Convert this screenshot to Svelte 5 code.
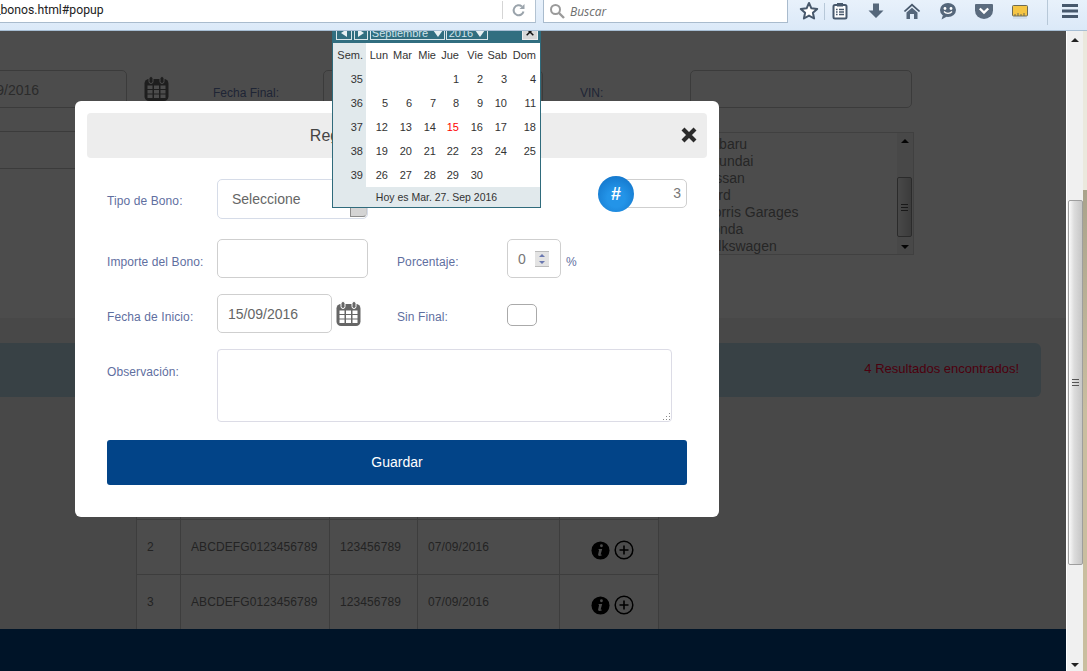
<script>
  const heads = ['Sem.', 'Lun', 'Mar', 'Mie', 'Jue', 'Vie', 'Sab', 'Dom'];
  const weeks = [
    [35, '', '', '', 1, 2, 3, 4],
    [36, 5, 6, 7, 8, 9, 10, 11],
    [37, 12, 13, 14, 15, 16, 17, 18],
    [38, 19, 20, 21, 22, 23, 24, 25],
    [39, 26, 27, 28, 29, 30, '', '']
  ];
  const brands = ['Subaru', 'Hyundai', 'Nissan', 'Ford', 'Morris Garages', 'Honda', 'Volkswagen'];
  const rows = [2, 3];
</script>

{#snippet calIcon()}
  <svg class="calicon" viewBox="0 0 25 25" aria-hidden="true">
    <rect x="0.5" y="3" width="24" height="22" rx="4.5" fill="currentColor" />
    <rect x="5" y="0.5" width="4" height="7" rx="2" fill="currentColor" stroke="var(--cal-bg)" />
    <rect x="16" y="0.5" width="4" height="7" rx="2" fill="currentColor" stroke="var(--cal-bg)" />
    {#each [9.5, 14, 18.5] as y}
      {#each [3.5, 10, 16.5] as x}
        <rect {x} {y} width="5" height="3.5" fill="var(--cal-bg)" />
      {/each}
    {/each}
  </svg>
{/snippet}

<div class="window">
  <header class="chrome">
    <div class="url">
      <span class="urltext">_bonos.html#popup</span>
      <span class="reload">
        <svg viewBox="0 0 16 16" width="16" height="16" aria-hidden="true">
          <path d="M12.5 9.5a5 5 0 1 1-1.6-5" fill="none" stroke="#9aa3ab" stroke-width="2" />
          <path d="M13.5 2v5h-5z" fill="#9aa3ab" />
        </svg>
      </span>
    </div>
    <div class="search">
      <svg viewBox="0 0 16 16" width="16" height="16" aria-hidden="true">
        <circle cx="6.5" cy="6.5" r="4.5" fill="none" stroke="#9a9a9a" stroke-width="2" />
        <path d="M10 10l5 5" stroke="#9a9a9a" stroke-width="2.4" />
      </svg>
      <span>Buscar</span>
    </div>
    <div class="tools">
      <svg class="star" viewBox="0 0 20 20" aria-hidden="true">
        <path d="M10 2l2.4 5.3 5.8.6-4.3 3.9 1.2 5.7-5.1-2.9-5.1 2.9 1.2-5.7L1.8 7.9l5.8-.6z" fill="#fff" stroke="#47586c" stroke-width="2" stroke-linejoin="round" />
      </svg>
      <i class="sep"></i>
      <svg class="list" viewBox="0 0 20 20" aria-hidden="true">
        <rect x="3.5" y="4" width="13" height="13.5" rx="1.5" fill="#fff" stroke="#47586c" stroke-width="2" />
        <rect x="7" y="2" width="6" height="3.5" fill="#47586c" />
        <path d="M6 8.5h1.6M9 8.5h5M6 11h1.6M9 11h5M6 13.5h1.6M9 13.5h5" stroke="#47586c" stroke-width="1.4" />
      </svg>
      <svg viewBox="0 0 20 20" aria-hidden="true">
        <path d="M7 2.5h6v7h4.5L10 17 2.5 9.5H7z" fill="#55677b" />
      </svg>
      <svg viewBox="0 0 20 20" aria-hidden="true">
        <path d="M10 2.5L1.8 10l1.3 1L10 5l6.900 6 1.300-1z" fill="#47586c" />
        <path d="M4.5 11.5L10 6.7l5.500 4.800v6.500h-3.500v-5H8v5H4.500z" fill="#55677b" />
      </svg>
      <svg viewBox="0 0 20 20" aria-hidden="true">
        <ellipse cx="10" cy="9" rx="8" ry="7" fill="#55677b" />
        <path d="M5 14l-1.5 4.500L9 15.500z" fill="#55677b" />
        <circle cx="7" cy="7.5" r="1.4" fill="#fff" />
        <circle cx="13" cy="7.5" r="1.4" fill="#fff" />
        <path d="M6 10.5c2 2.500 6 2.500 8 0" fill="none" stroke="#fff" stroke-width="1.3" />
      </svg>
      <svg viewBox="0 0 20 20" aria-hidden="true">
        <path d="M2 3h16a1 1 0 0 1 1 1v5.500a9 8.500 0 0 1-18 0V4a1 1 0 0 1 1-1z" fill="#5a6b7e" />
        <path d="M5.8 7.5L10 11.500l4.200-4" fill="none" stroke="#fff" stroke-width="2.4" />
      </svg>
      <svg class="ruler" viewBox="0 0 20 20" aria-hidden="true">
        <rect x="2.5" y="4.5" width="15" height="10.5" rx="1" fill="#f5c543" stroke="#6c6a55" />
        <path d="M5 15v-2M8 15v-3M11 15v-2M14 15v-3" stroke="#6c6a55" />
        <path d="M3 17h14" stroke="#cfdde9" stroke-width="1.5" />
      </svg>
      <i class="sep late"></i>
      <svg class="burger" viewBox="0 0 20 20" aria-hidden="true">
        <path d="M2 4.5h16M2 10h16M2 15.5h16" stroke="#47586c" stroke-width="3" />
      </svg>
    </div>
  </header>

  <div class="viewport">
    <main class="page">
      <section class="filters">
        <div class="frow">
          <input class="bg-input date" value="15/09/2016" readonly />
          <span class="bg-cal">{@render calIcon()}</span>
          <span class="bg-label final">Fecha Final:</span>
          <input class="bg-input mid" readonly />
          <span class="bg-label vin">VIN:</span>
          <input class="bg-input vinbox" readonly />
        </div>
        <div class="frow second">
          <input class="bg-input wide" readonly />
          <div class="listbox">
            <ul>
              {#each brands as b}<li>{b}</li>{/each}
            </ul>
            <div class="lb-bar">
              <i class="up"></i>
              <div class="lb-thumb"><b></b></div>
              <i class="down"></i>
            </div>
          </div>
        </div>
      </section>

      <section class="results">
        <div class="alert">4 Resultados encontrados!</div>
        <table>
          <colgroup>
            <col class="c1" /><col class="c2" /><col class="c3" /><col class="c4" /><col class="c5" />
          </colgroup>
          <tbody>
            <tr><td></td><td></td><td></td><td></td><td></td></tr>
            {#each rows as n}
              <tr>
                <td>{n}</td>
                <td>ABCDEFG0123456789</td>
                <td>123456789</td>
                <td>07/09/2016</td>
                <td>
                  <div class="acts">
                    <svg viewBox="0 0 20 20" width="19" height="19" aria-hidden="true">
                      <circle cx="10" cy="10" r="9.5" fill="#000" />
                      <path d="M11 3.5a1.5 1.5 0 1 1 0 3 1.5 1.5 0 0 1 0-3zM8 8.500h3.800L10.200 14c-.1.5.3.6 1.400.2l-.2.9c-1 .7-4.300 1.300-3.900-.8l1-4.700H8z" fill="#fff" />
                    </svg>
                    <svg viewBox="0 0 20 20" width="20" height="20" aria-hidden="true">
                      <circle cx="10" cy="10" r="8.8" fill="none" stroke="#000" stroke-width="1.5" />
                      <path d="M10 5.5v9M5.5 10h9" stroke="#000" stroke-width="1.6" />
                    </svg>
                  </div>
                </td>
              </tr>
            {/each}
          </tbody>
        </table>
      </section>
      <footer class="foot"></footer>

      <div class="overlay"></div>

      <div class="modal">
        <div class="mhead">
          <h2>Registro de Nuevo Bono</h2>
          <svg class="close" viewBox="0 0 18 18" aria-hidden="true">
            <path d="M3 3l12 12M15 3L3 15" stroke="#2b2b2b" stroke-width="4.2" />
          </svg>
        </div>
        <form class="mbody">
          <div class="mrow r1">
            <span class="lab">Tipo de Bono:</span>
            <div class="select">Seleccione<i></i></div>
            <div class="hash">
              <span class="ball">#</span>
              <input class="f hashin" value="3" readonly />
            </div>
          </div>
          <div class="mrow r2">
            <span class="lab">Importe del Bono:</span>
            <input class="f w151" readonly />
            <span class="lab second-col">Porcentaje:</span>
            <div class="number">
              0
              <span class="spin"><i class="sup"></i><i class="sdown"></i></span>
            </div>
            <span class="pct">%</span>
          </div>
          <div class="mrow r3">
            <span class="lab">Fecha de Inicio:</span>
            <input class="f w115" value="15/09/2016" readonly />
            <span class="m-cal">{@render calIcon()}</span>
            <span class="lab third-col">Sin Final:</span>
            <span class="check"></span>
          </div>
          <div class="mrow r4">
            <span class="lab">Observación:</span>
            <div class="ta">
              <textarea></textarea>
              <svg class="grip" viewBox="0 0 9 9" width="9" height="9" aria-hidden="true">
                <path d="M7 1h1v1H7zM4 4h1v1H4zM7 4h1v1H7zM1 7h1v1H1zM4 7h1v1H4zM7 7h1v1H7z" fill="#8a8a8a" />
              </svg>
            </div>
          </div>
          <button type="button" class="save">Guardar</button>
        </form>
      </div>

      <div class="cal">
        <div class="chead">
          <span class="cb prev"><i class="tl"></i></span>
          <span class="cb next"><i class="tr"></i></span>
          <span class="cb month">Septiembre<i class="td"></i></span>
          <span class="cb year">2016<i class="td"></i></span>
          <span class="cb x">
            <svg viewBox="0 0 12 12" width="10" height="10" aria-hidden="true">
              <path d="M2 2l8 8M10 2l-8 8" stroke="#111" stroke-width="1.8" />
            </svg>
          </span>
        </div>
        <div class="grid">
          {#each heads as h, i}
            <span class="cell" class:sem={i === 0}>{h}</span>
          {/each}
          {#each weeks as w}
            {#each w as d, i}
              <span class="cell" class:sem={i === 0} class:today={d === 15 && i !== 0}>{d}</span>
            {/each}
          {/each}
        </div>
        <div class="cfoot">Hoy es Mar. 27. Sep 2016</div>
      </div>
    </main>

    <aside class="scroll">
      <i class="arr aup"></i>
      <div class="thumb"><b></b></div>
      <i class="arr adown"></i>
    </aside>
    <div class="desk"></div>
  </div>
</div>

<style>
  :global(body) {
    margin: 0;
    overflow: hidden;
    font-family: "Liberation Sans", Arial, sans-serif;
  }
  .window {
    width: 1087px;
    height: 671px;
    display: flex;
    flex-direction: column;
    overflow: hidden;
  }

  /* browser toolbar */
  .chrome {
    height: 30px;
    flex: none;
    display: flex;
    align-items: flex-start;
    background: linear-gradient(#e8f1fb, #dbe9f8);
    border-bottom: 1px solid #a7bed4;
  }
  .url {
    width: 535px;
    height: 22px;
    flex: none;
    display: flex;
    justify-content: space-between;
    background: #fff;
    border-right: 1px solid #b3c3d2;
    border-bottom: 1px solid #a9bbcd;
    box-sizing: content-box;
    overflow: hidden;
  }
  .urltext {
    font: 12.2px/21px Roboto, sans-serif;
    color: #222;
    margin-left: -5px;
  }
  .reload {
    width: 32px;
    border-left: 1px solid #d5d5d5;
    height: 18px;
    display: flex;
    justify-content: center;
    align-items: center;
    margin-top: 1px;
  }
  .search {
    width: 243px;
    height: 22px;
    flex: none;
    margin-left: 7px;
    display: flex;
    align-items: center;
    background: #fff;
    border: 1px solid #a9bbcd;
    border-top: 0;
    box-sizing: content-box;
    font: italic 12px "Open Sans", sans-serif;
    color: #6e6e6e;
  }
  .search svg { margin: 0 5px 0 5px; }
  .tools {
    display: flex;
    align-items: center;
    height: 22px;
    margin-left: 11px;
    gap: 16px;
  }
  .tools svg { width: 20px; height: 20px; flex: none; display: block; }
  .sep {
    width: 1px;
    height: 17px;
    background: #b7c8d8;
    margin: 0 -11px 0 -11px;
  }
  .sep.late { margin: 0 -4px 0 1px; height: 28px; }

  .viewport { flex: 1; display: flex; min-height: 0; }

  /* page behind the modal */
  .page {
    position: relative;
    width: 1066px;
    flex: none;
    display: flex;
    flex-direction: column;
    overflow: hidden;
    background: #fff;
    font-size: 12px;
    color: #777;
  }
  .filters { height: 287px; flex: none; padding-top: 39px; box-sizing: border-box; }
  .frow { display: flex; align-items: flex-start; height: 38px; }
  .frow.second { margin-top: 23px; }
  .bg-input {
    height: 38px;
    box-sizing: border-box;
    border: 1px solid #c6c6c6;
    border-radius: 5px;
    background: #fff;
    font: 14px "Liberation Sans", sans-serif;
    color: #8f8f8f;
    padding: 1px 10px 0;
    flex: none;
  }
  .bg-input.date { width: 169px; margin-left: -42px; }
  .bg-cal { margin: 6px 0 0 17px; color: #666; --cal-bg: #fff; display: block; }
  .bg-cal :global(.calicon), .m-cal :global(.calicon) { display: block; width: 25px; height: 25px; }
  .bg-label { color: #6a7cb3; line-height: 14px; margin-top: 16px; flex: none; }
  .final { width: 110px; margin-left: 44px; }
  .bg-input.mid { width: 220px; }
  .vin { margin-left: 37px; width: 110px; }
  .bg-input.vinbox { width: 222px; }
  .bg-input.wide { width: 342px; margin-left: -42px; }
  .listbox {
    margin-left: 391px;
    margin-top: 1px;
    width: 223px;
    height: 123px;
    flex: none;
    box-sizing: border-box;
    display: flex;
    border: 1px solid #d8d8d8;
    overflow: hidden;
    background: #fff;
  }
  .listbox ul {
    list-style: none;
    margin: 3px 0 0;
    padding: 0 0 0 10px;
    flex: 1;
    font-size: 14px;
    line-height: 17px;
    color: #7f7f7f;
  }
  .lb-bar {
    width: 16px;
    flex: none;
    background: #f0f0f0;
    display: flex;
    flex-direction: column;
    align-items: center;
    position: relative;
  }
  .lb-thumb {
    position: absolute;
    top: 44px;
    left: 0;
    width: 15px;
    height: 60px;
    box-sizing: border-box;
    border: 1px solid #8f8f8f;
    border-radius: 2px;
    background: linear-gradient(90deg, #f2f2f2, #c9c9c9);
    display: flex;
    align-items: center;
    justify-content: center;
  }
  .lb-thumb b, .thumb b {
    width: 7px;
    height: 7px;
    background: repeating-linear-gradient(#555 0 1px, transparent 1px 3px);
  }
  .lb-bar .up, .lb-bar .down { position: absolute; left: 4px; width: 0; height: 0; border: 4px solid transparent; }
  .lb-bar .up { top: 6px; border-bottom-color: #111; border-top-width: 0; }
  .lb-bar .down { bottom: 5px; border-top-color: #111; border-bottom-width: 0; }

  .results { flex: 1; min-height: 0; background: #f2f2f2; padding-top: 25px; box-sizing: border-box; overflow: hidden; }
  .alert {
    height: 54px;
    box-sizing: border-box;
    margin: 0 25px 0 -20px;
    padding-right: 22px;
    background: #bbd9e6;
    border-radius: 6px;
    text-align: right;
    font-size: 13px;
    line-height: 52px;
    color: #ff0033;
  }
  table {
    border-collapse: collapse;
    table-layout: fixed;
    width: 522px;
    margin: 67px 0 0 136px;
    background: #fff;
    letter-spacing: 0.1px;
  }
  .c1 { width: 44px; } .c2 { width: 149px; } .c3 { width: 88px; } .c4 { width: 142px; } .c5 { width: 99px; }
  td { border: 1px solid #cdcdcd; height: 55px; padding: 0 0 0 10px; box-sizing: border-box; }
  .acts { display: flex; justify-content: center; align-items: center; gap: 4px; padding: 6px 4px 0 0; }
  .foot { height: 42px; flex: none; background: #004385; }

  .overlay { position: absolute; inset: 0; background: rgba(0, 0, 0, 0.7); }

  /* modal */
  .modal {
    position: absolute;
    left: 75px;
    top: 70px;
    width: 644px;
    box-sizing: border-box;
    padding: 12px 12px 32px;
    background: #fff;
    border-radius: 6px;
  }
  .mhead {
    height: 45px;
    position: relative;
    display: flex;
    align-items: center;
    justify-content: center;
    background: #ededed;
    border-radius: 4px;
  }
  h2 { margin: 0; font-size: 16px; font-weight: 400; color: #444; }
  .close { position: absolute; right: 9px; top: 13px; width: 18px; height: 18px; }
  .mbody { padding: 0 20px; }
  .mrow { display: flex; align-items: center; }
  .lab { width: 110px; flex: none; font-size: 12px; letter-spacing: 0.1px; color: #5f6f9f; padding-top: 6px; }
  .r1 { margin-top: 21px; height: 40px; }
  .r1 .lab { padding-top: 3px; }
  .r2 { margin-top: 20px; height: 39px; }
  .r3 { margin-top: 16px; height: 39px; }
  .r4 { margin-top: 16px; height: 73px; align-items: flex-start; }
  .r4 .lab { padding-top: 16px; }
  .f {
    height: 100%;
    box-sizing: border-box;
    border: 1px solid #cfcfcf;
    border-radius: 5px;
    background: #fff;
    font: 14px "Liberation Sans", sans-serif;
    color: #666;
    padding: 0 10px;
    flex: none;
    outline: none;
  }
  .w151 { width: 151px; }
  .w115 { width: 115px; }
  .select {
    position: relative;
    width: 151px;
    height: 100%;
    box-sizing: border-box;
    border: 1px solid #d6dce8;
    border-radius: 5px;
    padding-left: 14px;
    display: flex;
    align-items: center;
    font-size: 14px;
    color: #666;
  }
  .select i {
    position: absolute;
    right: 0;
    top: 1px;
    bottom: 1px;
    width: 17px;
    box-sizing: border-box;
    background: #d4d4d4;
    border: 1px solid #8c8c8c;
    border-right-color: #c8c8c8;
    border-radius: 0 0 4px 0;
  }
  .hash {
    position: relative;
    margin-left: auto;
    align-self: flex-start;
    width: 71px;
    height: 29px;
  }
  .hashin { width: 100%; text-align: right; padding: 0 5px 2px 0; color: #777; }
  .ball {
    position: absolute;
    left: -18px;
    top: -3px;
    width: 36px;
    height: 36px;
    border-radius: 50%;
    background: radial-gradient(circle at 50% 62%, #2394e8 30%, #0f6dc2 100%);
    color: #fff;
    font: bold 18px/36px "Liberation Sans", sans-serif;
    text-align: center;
  }
  .second-col { margin-left: 29px; }
  .number {
    position: relative;
    width: 54px;
    height: 100%;
    box-sizing: border-box;
    border: 1px solid #cfcfcf;
    border-radius: 5px;
    padding-left: 10px;
    display: flex;
    align-items: center;
    font-size: 14px;
    color: #777;
  }
  .spin {
    position: absolute;
    left: 27px;
    top: 11px;
    width: 14px;
    height: 16px;
    display: flex;
    flex-direction: column;
    align-items: center;
    background: #e3e3e3;
    border-top: 1px solid #bbb;
    border-bottom: 1px solid #bbb;
    box-sizing: border-box;
    justify-content: space-between;
    padding: 2px 0;
  }
  .sup, .sdown { width: 0; height: 0; border-left: 3px solid transparent; border-right: 3px solid transparent; }
  .sup { border-bottom: 3px solid #6a78b0; }
  .sdown { border-top: 3px solid #6a78b0; }
  .pct { margin-left: 5px; padding-top: 6px; font-size: 12px; color: #5f6f9f; }
  .m-cal { margin: 0 0 0 4px; color: #666; --cal-bg: #fff; display: block; flex: none; }
  .third-col { margin-left: 36px; }
  .check {
    width: 30px;
    height: 22px;
    margin-top: 3px;
    box-sizing: border-box;
    border: 1px solid #aaa;
    border-radius: 5px;
  }
  .ta { position: relative; flex: none; width: 455px; height: 73px; }
  textarea {
    display: block;
    width: 100%;
    height: 100%;
    box-sizing: border-box;
    border: 1px solid #dcdce6;
    border-radius: 4px;
    margin: 0;
    padding: 0;
    outline: none;
    resize: none;
  }
  .grip { position: absolute; right: 1px; bottom: 1px; }
  .save {
    display: block;
    width: 580px;
    height: 45px;
    margin: 18px 0 0;
    border: 0;
    border-radius: 3px;
    background: #024488;
    color: #fff;
    font: 14px "Liberation Sans", sans-serif;
    padding: 0 0 2px;
  }

  /* date picker */
  .cal {
    position: absolute;
    left: 332px;
    top: -10px;
    width: 209px;
    box-sizing: border-box;
    border: 1px solid #2f6b7c;
    background: #fff;
    font-size: 11px;
    color: #333;
  }
  .chead {
    height: 21px;
    display: flex;
    align-items: flex-start;
    padding: 1px 0 0 3px;
    box-sizing: border-box;
    background: #316e80;
  }
  .cb {
    height: 17px;
    box-sizing: border-box;
    border: 1px solid #dbe6ea;
    color: #cfe3ea;
    display: flex;
    align-items: center;
    justify-content: center;
    font-size: 11px;
    line-height: 13px;
    padding-top: 3px;
    flex: none;
  }
  .prev { width: 16px; }
  .next { width: 14px; margin-left: 2px; }
  .month { width: 75px; margin-left: 2px; gap: 5px; }
  .year { width: 42px; margin-left: 1px; gap: 2px; }
  .x { width: 16px; margin-left: 34px; background: #d8d8d8; border-color: #eee; padding-top: 0; }
  .tl, .tr, .td { width: 0; height: 0; display: block; flex: none; border: 0 solid transparent; }
  .tl { border-width: 4px 6px 4px 0; border-right-color: #e8f0f3; }
  .tr { border-width: 4px 0 4px 6px; border-left-color: #e8f0f3; }
  .td { border-width: 7px 5px 0; border-top-color: #e8f0f3; }
  .grid { display: grid; grid-template-columns: 33px 25px 24px 24px 23px 24px 24px 30px; grid-auto-rows: 24px; }
  .cell { text-align: right; padding-right: 3px; line-height: 24px; }
  .cell:nth-child(8n) { padding-right: 4px; }
  .sem { background: #e1e9ec; }
  .today { color: #f00; }
  .cfoot {
    height: 20px;
    background: #e1e9ec;
    text-align: center;
    font-size: 10.5px;
    line-height: 20px;
  }

  /* browser scrollbar */
  .scroll {
    position: relative;
    width: 17px;
    flex: none;
    background: #f0f0f0;
    border-left: 1px solid #fff;
    box-sizing: border-box;
  }
  .thumb {
    position: absolute;
    left: 1px;
    top: 169px;
    width: 15px;
    height: 365px;
    box-sizing: border-box;
    border: 1px solid #9e9e9e;
    border-radius: 2px;
    background: linear-gradient(90deg, #fafafa, #dcdcdc 40%, #c6c6c6);
    display: flex;
    align-items: center;
    justify-content: center;
  }
  .arr { position: absolute; left: 4px; width: 0; height: 0; border: 4px solid transparent; }
  .aup { top: 7px; border-bottom-color: #222; border-top-width: 0; }
  .adown { bottom: 4px; border-top-color: #222; border-bottom-width: 0; }
  .desk {
    flex: 1;
    background: linear-gradient(#ebe8dd 0 159px, #a9a38b 159px, #c9be9f 380px, #c9be9f);
  }
</style>
